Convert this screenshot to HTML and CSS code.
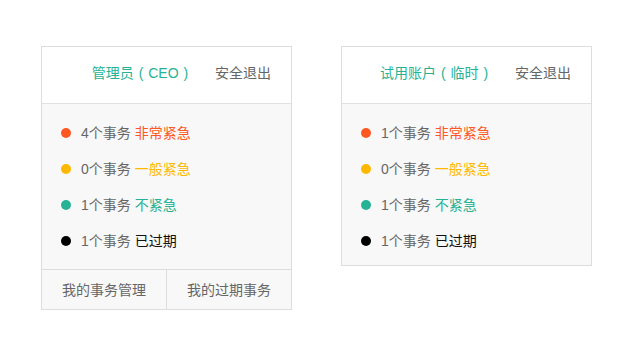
FILE: index.html
```html
<!DOCTYPE html>
<html lang="zh-CN">
<head>
<meta charset="UTF-8">
<meta name="viewport" content="width=device-width, initial-scale=1.0">
<title>事务面板</title>
<link rel="stylesheet" href="styles.css">
</head>
<body>
<div class="panels">
  <div class="card">
    <div class="card-head">
      <span class="user">管理员 ( CEO )</span>
      <a class="logout">安全退出</a>
    </div>
    <ul class="card-body">
      <li><i class="dot red"></i>4个事务 <span class="red-text">非常紧急</span></li>
      <li><i class="dot yellow"></i>0个事务 <span class="yellow-text">一般紧急</span></li>
      <li><i class="dot green"></i>1个事务 <span class="green-text">不紧急</span></li>
      <li><i class="dot black"></i>1个事务 <span class="black-text">已过期</span></li>
    </ul>
    <div class="card-foot">
      <a>我的事务管理</a>
      <a>我的过期事务</a>
    </div>
  </div>

  <div class="card">
    <div class="card-head">
      <span class="user">试用账户 ( 临时 )</span>
      <a class="logout">安全退出</a>
    </div>
    <ul class="card-body short">
      <li><i class="dot red"></i>1个事务 <span class="red-text">非常紧急</span></li>
      <li><i class="dot yellow"></i>0个事务 <span class="yellow-text">一般紧急</span></li>
      <li><i class="dot green"></i>1个事务 <span class="green-text">不紧急</span></li>
      <li><i class="dot black"></i>1个事务 <span class="black-text">已过期</span></li>
    </ul>
  </div>
</div>
</body>
</html>
```

FILE: styles.css
```css
body {
  margin: 0;
  background: #fff;
  font-family: "Liberation Sans", "Noto Sans CJK SC", sans-serif;
  font-size: 14px;
  color: #666;
}

.panels {
  display: flex;
  align-items: flex-start;
  gap: 49px;
  padding: 46px 0 0 41px;
}

.card {
  width: 251px;
  box-sizing: border-box;
  border: 1px solid #ddd;
  background: #f8f8f8;
}

.card-head {
  height: 57px;
  line-height: 52px;
  background: #fff;
  border-bottom: 1px solid #e2e2e2;
  text-align: right;
  padding-right: 20px;
  box-sizing: border-box;
}

.user {
  color: #26b294;
  margin-right: 23px;
  word-spacing: 1px;
}

.logout {
  color: #666;
  cursor: pointer;
}

.card-body {
  list-style: none;
  margin: 0;
  padding: 11px 0 10px 19px;
}

.card-body.short {
  padding-bottom: 6px;
}

.card-body li {
  height: 36px;
  line-height: 36px;
  display: flex;
  align-items: center;
  white-space: pre;
}

.dot {
  width: 10px;
  height: 10px;
  border-radius: 50%;
  margin-right: 10px;
}

.red { background: #ff5722; }
.yellow { background: #ffb800; }
.green { background: #26b294; }
.black { background: #000; }

.red-text { color: #ff5722; }
.yellow-text { color: #ffb800; }
.green-text { color: #26b294; }
.black-text { color: #111; }

.card-foot {
  display: flex;
  border-top: 1px solid #ddd;
}

.card-foot a {
  flex: 1;
  height: 39px;
  line-height: 40px;
  text-align: center;
  color: #666;
  cursor: pointer;
}

.card-foot a + a {
  border-left: 1px solid #ddd;
}
```
